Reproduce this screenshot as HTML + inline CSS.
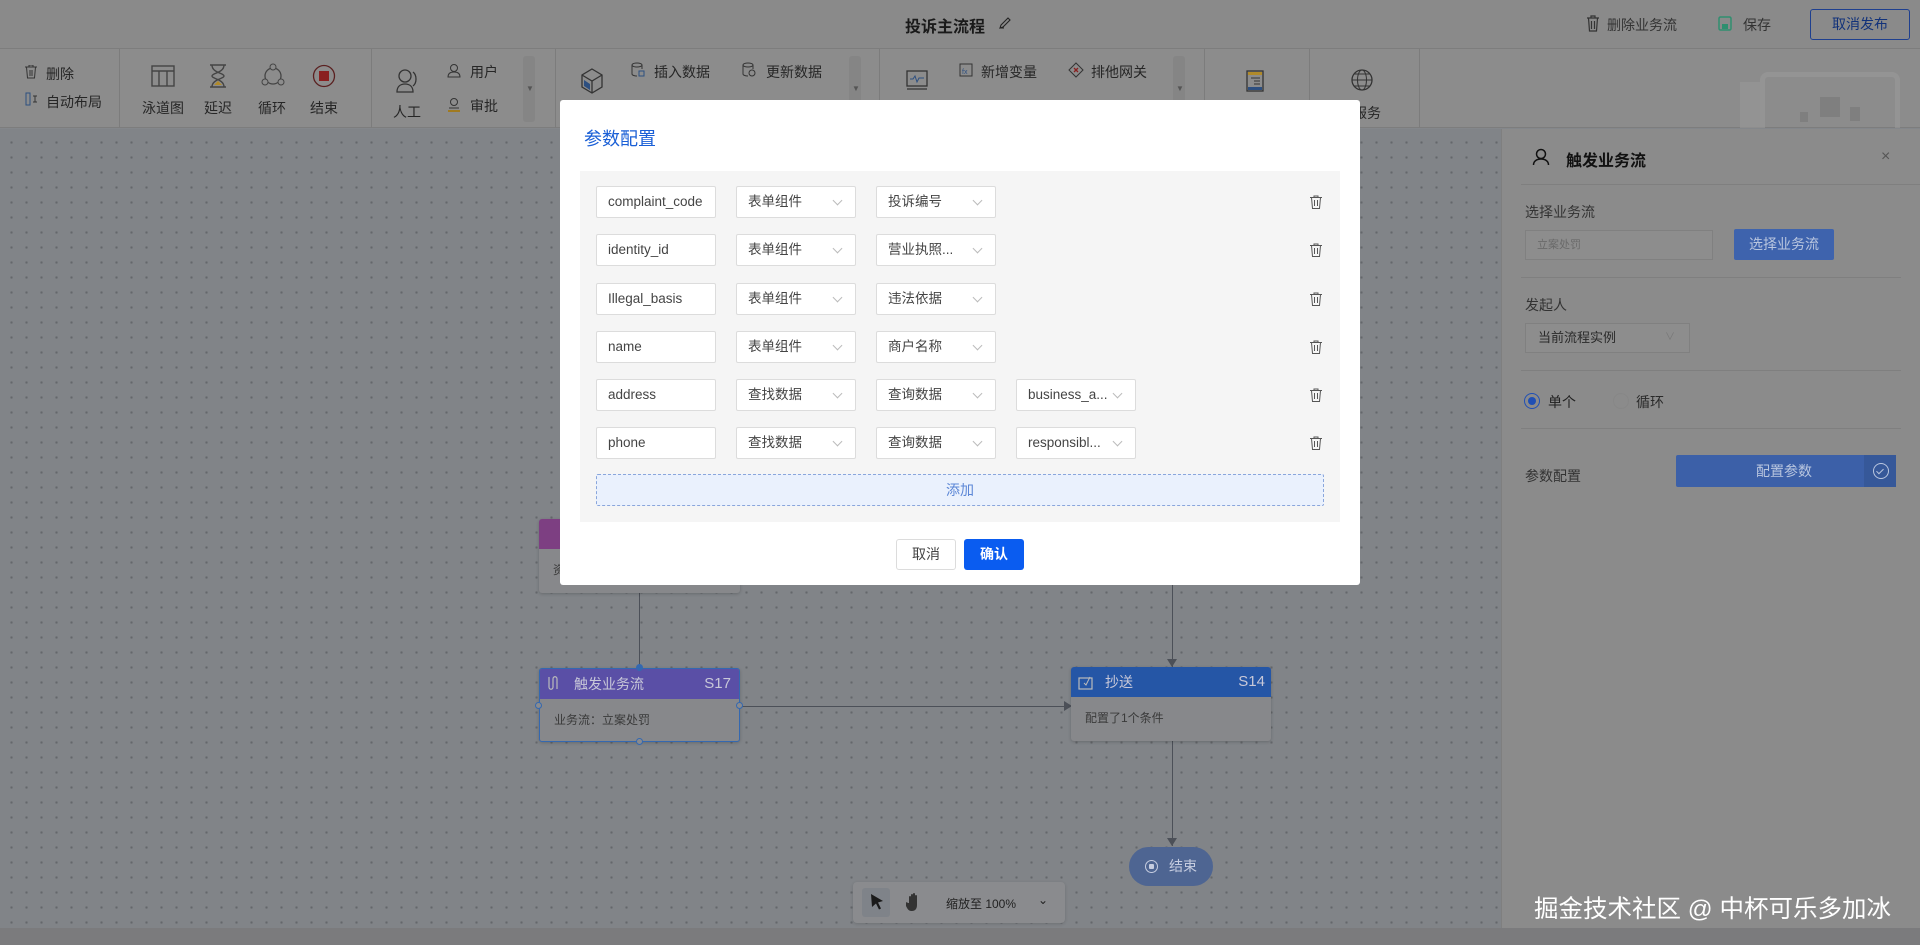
<!DOCTYPE html>
<html><head><meta charset="utf-8"><style>
*{box-sizing:border-box;margin:0;padding:0}
body{width:1920px;height:945px;overflow:hidden;position:relative;font-family:"Liberation Sans","Noto Sans CJK SC",sans-serif;background:#84878b;color:#222}
.a{position:absolute}
.hdr{left:0;top:0;width:1920px;height:49px;background:#8a8a8a;border-bottom:1px solid #7d7d7d}
.tb{left:0;top:49px;width:1920px;height:79px;background:#8c8c8c;border-bottom:1px solid #7d7d7d}
.dv{top:49px;width:1px;height:79px;background:#7c7c7c}
.t{font-size:14px;color:#262626;white-space:nowrap}
.canvas{left:0;top:129px;width:1501px;height:799px;background-color:#818488;background-image:radial-gradient(circle,#64676b 1.1px,transparent 1.3px);background-size:15px 15px;background-position:4px 6px}
.panel{left:1501px;top:129px;width:419px;height:799px;background:#8b8b8b;border-left:1px solid #7f7f7f}
.hl{height:1px;background:#7f7f7f}
.bot{left:0;top:928px;width:1920px;height:17px;background:#7b7b7d}
.modal{left:560px;top:100px;width:800px;height:485px;background:#fff;border-radius:3px}
.box{left:20px;top:71px;width:760px;height:351px;background:#f5f5f5}
.in{position:absolute;height:32px;border:1px solid #dcdcdc;background:#fff;border-radius:2px;font-size:13.5px;color:#444;line-height:30px;padding-left:11px;white-space:nowrap;overflow:hidden}
.sel::after{content:"";position:absolute;right:14px;top:10px;width:6px;height:6px;border-right:1px solid #bbb;border-bottom:1px solid #bbb;transform:rotate(45deg)}
.trash{position:absolute;width:12px;height:14px}
.node{position:absolute;border-radius:3px;overflow:hidden;background:#87888b;box-shadow:0 1px 3px rgba(0,0,0,.2)}
.nh{height:30px;color:#c8c8d8;font-size:14px;line-height:30px;padding-left:34px;position:relative}
.nb{font-size:12px;color:#3a3a3a;padding:12px 14px}
</style></head><body>
<div class="a hdr"></div>
<div class="a" style="left:905px;top:13px;font-size:16px;font-weight:bold;color:#1a1a1a">投诉主流程</div>
<svg class="a" style="left:998px;top:16px" width="14" height="14" viewBox="0 0 14 14"><path d="M2 12 L3 9 L10 2 L12 4 L5 11 Z M2 12 L6 12" fill="none" stroke="#222" stroke-width="1.1"/></svg>
<svg class="a" style="left:1586px;top:15px" width="14" height="17" viewBox="0 0 14 17"><path d="M1 3h12M5 3V1h4v2M2.5 3l1 13h7l1-13M5.5 6v8M8.5 6v8" fill="none" stroke="#333" stroke-width="1.2"/></svg>
<div class="a t" style="left:1607px;top:15px;color:#333">删除业务流</div>
<svg class="a" style="left:1718px;top:16px" width="14" height="15" viewBox="0 0 14 15"><rect x="1" y="1" width="12" height="13" rx="1.5" fill="none" stroke="#2f8f6f" stroke-width="1.5"/><rect x="4" y="8" width="6" height="5" fill="#2f8f6f"/></svg>
<div class="a t" style="left:1743px;top:15px;color:#333">保存</div>
<div class="a" style="left:1810px;top:9px;width:100px;height:31px;border:1px solid #1e3f8f;border-radius:3px;font-size:14px;color:#12327a;text-align:center;line-height:29px">取消发布</div>

<div class="a tb"></div>
<div class="a dv" style="left:119px"></div><div class="a dv" style="left:371px"></div><div class="a dv" style="left:555px"></div><div class="a dv" style="left:879px"></div><div class="a dv" style="left:1204px"></div><div class="a dv" style="left:1309px"></div><div class="a dv" style="left:1419px"></div>
<svg class="a" style="left:25px;top:65px" width="12" height="14" viewBox="0 0 12 14"><path d="M0 2h12M4 2V0h4v2M1.5 2l1 11h7l1-11M5 5v6M7 5v6" fill="none" stroke="#333" stroke-width="1"/></svg>
<div class="a t" style="left:46px;top:64px">删除</div>
<svg class="a" style="left:25px;top:92px" width="14" height="14" viewBox="0 0 14 14"><rect x="1" y="1" width="4" height="12" fill="none" stroke="#2d4f80"/><path d="M8 4h4M8 10h4M10 4v6" stroke="#333" fill="none"/></svg>
<div class="a t" style="left:46px;top:92px">自动布局</div>
<svg class="a" style="left:151px;top:64px" width="24" height="24" viewBox="0 0 24 24"><rect x="1" y="2" width="22" height="20" fill="none" stroke="#444" stroke-width="1.4"/><path d="M1 7h22M8 7v15M16 7v15" stroke="#444" stroke-width="1.4"/></svg>
<svg class="a" style="left:207px;top:64px" width="22" height="24" viewBox="0 0 22 24"><path d="M3 1h16M3 23h16M5 1c0 8 12 8 12 11S5 15 5 23M17 1c0 8-12 8-12 11s12 3 12 11" fill="none" stroke="#444" stroke-width="1.4"/><path d="M7 21l4-4 4 4z" fill="#b08a2a"/></svg>
<svg class="a" style="left:260px;top:63px" width="26" height="26" viewBox="0 0 26 26"><circle cx="13" cy="13" r="8" fill="none" stroke="#444" stroke-width="1.3"/><circle cx="13" cy="4" r="3" fill="#8c8c8c" stroke="#444"/><circle cx="5" cy="19" r="3" fill="#8c8c8c" stroke="#444"/><circle cx="21" cy="19" r="3" fill="#8c8c8c" stroke="#444"/></svg>
<svg class="a" style="left:312px;top:64px" width="24" height="24" viewBox="0 0 24 24"><circle cx="12" cy="12" r="10.5" fill="none" stroke="#5a2020" stroke-width="1.3"/><rect x="7" y="7" width="10" height="10" fill="#8a2020"/></svg>
<div class="a t" style="left:142px;top:98px">泳道图</div>
<div class="a t" style="left:204px;top:98px">延迟</div>
<div class="a t" style="left:258px;top:98px">循环</div>
<div class="a t" style="left:310px;top:98px">结束</div>
<svg class="a" style="left:395px;top:68px" width="24" height="26" viewBox="0 0 24 26"><circle cx="10" cy="8" r="6" fill="none" stroke="#333" stroke-width="1.3"/><path d="M2 24c0-6 4-8 8-8s8 2 8 8z" fill="none" stroke="#333" stroke-width="1.3"/><path d="M18 4c4 3 4 11 0 14" fill="none" stroke="#333" stroke-width="1.3"/></svg>
<div class="a t" style="left:393px;top:102px">人工</div>
<svg class="a" style="left:447px;top:63px" width="14" height="15" viewBox="0 0 14 15"><circle cx="7" cy="5" r="3.5" fill="none" stroke="#333"/><path d="M1 14c0-4 3-5 6-5s6 1 6 5z" fill="none" stroke="#333"/></svg>
<div class="a t" style="left:470px;top:62px">用户</div>
<svg class="a" style="left:447px;top:97px" width="14" height="15" viewBox="0 0 14 15"><circle cx="7" cy="5" r="3.5" fill="none" stroke="#333"/><path d="M2 11h10" stroke="#333"/><path d="M1 13h12v2H1z" fill="#a07a20"/></svg>
<div class="a t" style="left:470px;top:96px">审批</div>
<div class="a" style="left:523px;top:56px;width:12px;height:66px;background:#858585;border-radius:3px"></div>
<div class="a" style="left:526px;top:84px;font-size:8px;color:#555">▼</div>
<svg class="a" style="left:580px;top:68px" width="24" height="26" viewBox="0 0 24 26"><path d="M12 1l10 6v12l-10 6-10-6V7z M2 7l10 6 10-6M12 13v12" fill="none" stroke="#333" stroke-width="1.3"/><path d="M4 12l6 4v6l-6-4z" fill="#2d4f80"/></svg>
<svg class="a" style="left:631px;top:62px" width="14" height="16" viewBox="0 0 14 16"><ellipse cx="6" cy="3" rx="5" ry="2" fill="none" stroke="#333"/><path d="M1 3v9c0 1 2 2 5 2M11 3v4" fill="none" stroke="#333"/><rect x="8" y="9" width="5" height="5" fill="none" stroke="#2d4f80"/></svg>
<div class="a t" style="left:654px;top:62px">插入数据</div>
<svg class="a" style="left:742px;top:62px" width="14" height="16" viewBox="0 0 14 16"><ellipse cx="6" cy="3" rx="5" ry="2" fill="none" stroke="#333"/><path d="M1 3v9c0 1 2 2 5 2M11 3v4" fill="none" stroke="#333"/><circle cx="10" cy="11" r="3" fill="none" stroke="#333"/></svg>
<div class="a t" style="left:766px;top:62px">更新数据</div>
<div class="a" style="left:849px;top:56px;width:12px;height:66px;background:#858585;border-radius:3px"></div>
<div class="a" style="left:852px;top:84px;font-size:8px;color:#555">▼</div>
<svg class="a" style="left:906px;top:70px" width="22" height="20" viewBox="0 0 22 20"><rect x="1" y="1" width="20" height="15" fill="none" stroke="#333" stroke-width="1.3"/><path d="M4 9h3l2-3 2 6 2-4h5" fill="none" stroke="#2d4f80"/><path d="M1 19h20" stroke="#333" stroke-width="1.3"/></svg>
<svg class="a" style="left:959px;top:63px" width="14" height="14" viewBox="0 0 14 14"><rect x="1" y="1" width="12" height="12" fill="none" stroke="#333"/><text x="3" y="11" font-size="7" fill="#2d4f80">fx</text></svg>
<div class="a t" style="left:981px;top:62px">新增变量</div>
<svg class="a" style="left:1068px;top:62px" width="16" height="16" viewBox="0 0 16 16"><path d="M8 1l7 7-7 7-7-7z" fill="none" stroke="#333"/><path d="M6 6l4 4M10 6l-4 4" stroke="#8a2020" stroke-width="1.3"/></svg>
<div class="a t" style="left:1091px;top:62px">排他网关</div>
<div class="a" style="left:1173px;top:56px;width:12px;height:66px;background:#858585;border-radius:3px"></div>
<div class="a" style="left:1176px;top:84px;font-size:8px;color:#555">▼</div>
<svg class="a" style="left:1246px;top:70px" width="18" height="22" viewBox="0 0 18 22"><rect x="1" y="1" width="16" height="20" fill="none" stroke="#333" stroke-width="1.3"/><rect x="2" y="2" width="14" height="3" fill="#b08a2a"/><path d="M5 8h9M8 11h6M8 14h6" stroke="#333"/><rect x="2" y="17" width="14" height="3" fill="#2d4f80"/></svg>
<svg class="a" style="left:1350px;top:68px" width="24" height="24" viewBox="0 0 24 24"><circle cx="12" cy="12" r="10" fill="none" stroke="#333" stroke-width="1.3"/><ellipse cx="12" cy="12" rx="4.5" ry="10" fill="none" stroke="#333"/><path d="M2 12h20M4 6h16M4 18h16" stroke="#333"/></svg>
<div class="a t" style="left:1353px;top:103px">服务</div>
<div class="a" style="left:1740px;top:72px;width:160px;height:56px;opacity:.6">
<div class="a" style="left:20px;top:0;width:140px;height:56px;border:5px solid #9a9a9a;border-bottom:none;border-radius:8px 8px 0 0"></div>
<div class="a" style="left:0;top:10px;width:20px;height:46px;background:#999"></div>
<div class="a" style="left:80px;top:25px;width:20px;height:20px;background:#777"></div>
<div class="a" style="left:110px;top:35px;width:10px;height:14px;background:#777"></div>
<div class="a" style="left:60px;top:40px;width:8px;height:10px;background:#777"></div>
</div>

<div class="a canvas"></div>
<div class="a" style="left:639px;top:590px;width:1px;height:78px;background:#4c5058"></div>
<div class="a" style="left:1172px;top:585px;width:1px;height:82px;background:#4c5058"></div>
<div class="a" style="left:1172px;top:741px;width:1px;height:105px;background:#4c5058"></div>
<div class="a" style="left:740px;top:706px;width:326px;height:1px;background:#4c5058"></div>
<div class="a" style="left:1064px;top:701px;width:0;height:0;border-left:8px solid #4c5058;border-top:5px solid transparent;border-bottom:5px solid transparent"></div>
<div class="a" style="left:1167px;top:659px;width:0;height:0;border-top:8px solid #4c5058;border-left:5px solid transparent;border-right:5px solid transparent"></div>
<div class="a" style="left:1167px;top:838px;width:0;height:0;border-top:8px solid #4c5058;border-left:5px solid transparent;border-right:5px solid transparent"></div>
<div class="node" style="left:539px;top:519px;width:201px;height:74px"><div class="nh" style="background:#7d3f82"></div><div class="nb">资</div></div>
<div class="node" style="left:539px;top:668px;width:201px;height:74px;border:1px solid #3468b0"><div class="nh" style="background:#5a4fa6">触发业务流<span style="position:absolute;right:8px;font-size:15px">S17</span></div><div class="nb">业务流：立案处罚</div></div>
<svg class="a" style="left:547px;top:675px" width="14" height="16" viewBox="0 0 14 16"><path d="M2 2v10c0 3 4 3 4 0V4c0-3 4-3 4 0v10" fill="none" stroke="#bbb" stroke-width="1.2"/></svg>
<div class="a" style="left:535px;top:702px;width:7px;height:7px;border:1px solid #3468b0;border-radius:50%;background:#8a8b8e"></div>
<div class="a" style="left:736px;top:702px;width:7px;height:7px;border:1px solid #3468b0;border-radius:50%;background:#8a8b8e"></div>
<div class="a" style="left:636px;top:738px;width:7px;height:7px;border:1px solid #3468b0;border-radius:50%;background:#8a8b8e"></div>
<div class="a" style="left:636px;top:664px;width:7px;height:7px;border-radius:50%;background:#3468b0"></div>
<div class="node" style="left:1071px;top:667px;width:200px;height:74px"><div class="nh" style="background:#2556a6">抄送<span style="position:absolute;right:6px;font-size:15px">S14</span></div><div class="nb">配置了1个条件</div></div>
<svg class="a" style="left:1078px;top:674px" width="16" height="16" viewBox="0 0 16 16"><rect x="1" y="4" width="13" height="11" fill="none" stroke="#bbb" stroke-width="1.2"/><path d="M6 9l2 2 4-8" fill="none" stroke="#bbb"/></svg>
<div class="a" style="left:1129px;top:847px;width:84px;height:39px;border-radius:20px;background:#4e6592;color:#c6cde0;font-size:14px;line-height:39px;padding-left:40px">结束</div>
<div class="a" style="left:1145px;top:860px;width:13px;height:13px;border:1.5px solid #c6cde0;border-radius:50%"></div>
<div class="a" style="left:1149px;top:864px;width:5px;height:5px;background:#c6cde0;border-radius:1px"></div>
<div class="a" style="left:853px;top:882px;width:212px;height:41px;background:#8a8b8e;border-radius:4px;box-shadow:0 1px 3px rgba(0,0,0,.15)"></div>
<div class="a" style="left:862px;top:888px;width:28px;height:29px;background:#7f8389;border-radius:3px"></div>
<svg class="a" style="left:869px;top:893px" width="16" height="18" viewBox="0 0 16 18"><path d="M2 1l12 7-5 1.5 3 6-2 1-3-6-4 3.5z" fill="#1a1a1a"/></svg>
<svg class="a" style="left:906px;top:892px" width="16" height="20" viewBox="0 0 16 20"><path d="M3 11V5a1 1 0 0 1 2 0v5V3a1 1 0 0 1 2 0v7V2a1 1 0 0 1 2 0v8V4a1 1 0 0 1 2 0v9c0 4-2 6-5 6s-4-1-6-5l-1-3c0-1 2-1 3 0z" fill="#333"/></svg>
<div class="a" style="left:946px;top:895px;font-size:12px;color:#222">缩放至 100%</div>
<div class="a" style="left:1038px;top:893px;font-size:12px;color:#222">⌄</div>

<div class="a panel"></div>
<svg class="a" style="left:1532px;top:148px" width="18" height="18" viewBox="0 0 18 18"><circle cx="9" cy="6" r="4.5" fill="none" stroke="#111" stroke-width="1.5"/><path d="M1.5 17c0-4 3.5-6 7.5-6s7.5 2 7.5 6" fill="none" stroke="#111" stroke-width="1.5"/></svg>
<div class="a" style="left:1566px;top:147px;font-size:16px;font-weight:bold;color:#111">触发业务流</div>
<div class="a" style="left:1881px;top:148px;font-size:16px;color:#555">×</div>
<div class="a hl" style="left:1521px;top:184px;width:399px"></div>
<div class="a" style="left:1525px;top:202px;font-size:14px;color:#333">选择业务流</div>
<div class="a" style="left:1525px;top:230px;width:188px;height:30px;background:#8d8d8d;border:1px solid #808080;font-size:11px;color:#6a6a6a;line-height:28px;padding-left:11px">立案处罚</div>
<div class="a" style="left:1734px;top:229px;width:100px;height:31px;background:#3e63ad;border-radius:2px;color:#b9c6df;font-size:14px;text-align:center;line-height:31px">选择业务流</div>
<div class="a hl" style="left:1521px;top:277px;width:380px"></div>
<div class="a" style="left:1525px;top:295px;font-size:14px;color:#333">发起人</div>
<div class="a" style="left:1525px;top:323px;width:165px;height:30px;background:#8d8d8d;border:1px solid #808080;font-size:13px;color:#2a2a2a;line-height:28px;padding-left:12px">当前流程实例<span style="position:absolute;right:14px;top:0;color:#777;font-size:10px">∨</span></div>
<div class="a hl" style="left:1521px;top:370px;width:380px"></div>
<div class="a" style="left:1524px;top:393px;width:16px;height:16px;border:1.5px solid #1f4fb5;border-radius:50%"></div>
<div class="a" style="left:1528px;top:397px;width:8px;height:8px;background:#1f4fb5;border-radius:50%"></div>
<div class="a" style="left:1548px;top:392px;font-size:14px;color:#222">单个</div>
<div class="a" style="left:1613px;top:393px;width:16px;height:16px;border:1px solid #878787;border-radius:50%"></div>
<div class="a" style="left:1636px;top:392px;font-size:14px;color:#2a2a2a">循环</div>
<div class="a hl" style="left:1521px;top:428px;width:380px"></div>
<div class="a" style="left:1525px;top:466px;font-size:14px;color:#333">参数配置</div>
<div class="a" style="left:1676px;top:455px;width:220px;height:32px;background:#3c60a8;border-radius:2px;color:#b9c6df;font-size:14px;line-height:32px;padding-left:80px">配置参数</div>
<div class="a" style="left:1864px;top:455px;width:32px;height:32px;background:#365899"></div>
<div class="a" style="left:1873px;top:463px;width:16px;height:16px;border:1.3px solid #b9c6df;border-radius:50%"></div>
<div class="a" style="left:1878px;top:467px;width:4px;height:7px;border-right:1.3px solid #b9c6df;border-bottom:1.3px solid #b9c6df;transform:rotate(45deg)"></div>
<div class="a bot"></div>

<div class="a modal">
<div class="a" style="left:24px;top:25px;font-size:18px;color:#1a5fd6">参数配置</div>
<div class="a box">
<div class="in" style="left:16px;top:15px;width:120px">complaint_code</div><div class="in sel" style="left:156px;top:15px;width:120px">表单组件</div><div class="in sel" style="left:296px;top:15px;width:120px">投诉编号</div>
<div class="in" style="left:16px;top:63px;width:120px">identity_id</div><div class="in sel" style="left:156px;top:63px;width:120px">表单组件</div><div class="in sel" style="left:296px;top:63px;width:120px">营业执照...</div>
<div class="in" style="left:16px;top:112px;width:120px">Illegal_basis</div><div class="in sel" style="left:156px;top:112px;width:120px">表单组件</div><div class="in sel" style="left:296px;top:112px;width:120px">违法依据</div>
<div class="in" style="left:16px;top:160px;width:120px">name</div><div class="in sel" style="left:156px;top:160px;width:120px">表单组件</div><div class="in sel" style="left:296px;top:160px;width:120px">商户名称</div>
<div class="in" style="left:16px;top:208px;width:120px">address</div><div class="in sel" style="left:156px;top:208px;width:120px">查找数据</div><div class="in sel" style="left:296px;top:208px;width:120px">查询数据</div><div class="in sel" style="left:436px;top:208px;width:120px">business_a...</div>
<div class="in" style="left:16px;top:256px;width:120px">phone</div><div class="in sel" style="left:156px;top:256px;width:120px">查找数据</div><div class="in sel" style="left:296px;top:256px;width:120px">查询数据</div><div class="in sel" style="left:436px;top:256px;width:120px">responsibl...</div>
<svg class="trash" style="left:730px;top:24px" viewBox="0 0 12 14"><path d="M0 2.5h12M4 2.5V1h4v1.5M1.5 2.5l1 11h7l1-11M4.5 5v6M7.5 5v6" fill="none" stroke="#555" stroke-width="1"/></svg>
<svg class="trash" style="left:730px;top:72px" viewBox="0 0 12 14"><path d="M0 2.5h12M4 2.5V1h4v1.5M1.5 2.5l1 11h7l1-11M4.5 5v6M7.5 5v6" fill="none" stroke="#555" stroke-width="1"/></svg>
<svg class="trash" style="left:730px;top:121px" viewBox="0 0 12 14"><path d="M0 2.5h12M4 2.5V1h4v1.5M1.5 2.5l1 11h7l1-11M4.5 5v6M7.5 5v6" fill="none" stroke="#555" stroke-width="1"/></svg>
<svg class="trash" style="left:730px;top:169px" viewBox="0 0 12 14"><path d="M0 2.5h12M4 2.5V1h4v1.5M1.5 2.5l1 11h7l1-11M4.5 5v6M7.5 5v6" fill="none" stroke="#555" stroke-width="1"/></svg>
<svg class="trash" style="left:730px;top:217px" viewBox="0 0 12 14"><path d="M0 2.5h12M4 2.5V1h4v1.5M1.5 2.5l1 11h7l1-11M4.5 5v6M7.5 5v6" fill="none" stroke="#555" stroke-width="1"/></svg>
<svg class="trash" style="left:730px;top:265px" viewBox="0 0 12 14"><path d="M0 2.5h12M4 2.5V1h4v1.5M1.5 2.5l1 11h7l1-11M4.5 5v6M7.5 5v6" fill="none" stroke="#555" stroke-width="1"/></svg>
<div class="a" style="left:16px;top:303px;width:728px;height:32px;border:1px dashed #8aa6dc;background:#eaf1fd;border-radius:2px;color:#5b86d6;font-size:14px;text-align:center;line-height:30px">添加</div>
</div>
<div class="a" style="left:336px;top:439px;width:60px;height:31px;border:1px solid #dcdcdc;border-radius:3px;font-size:14px;color:#444;text-align:center;line-height:29px">取消</div>
<div class="a" style="left:404px;top:439px;width:60px;height:31px;background:#0a5cf0;border-radius:3px;font-size:14px;font-weight:bold;color:#fff;text-align:center;line-height:31px">确认</div>
</div>

<div class="a" style="left:1534px;top:890px;font-size:24.5px;color:#fff;white-space:nowrap">掘金技术社区 @ 中杯可乐多加冰</div>
</body></html>
